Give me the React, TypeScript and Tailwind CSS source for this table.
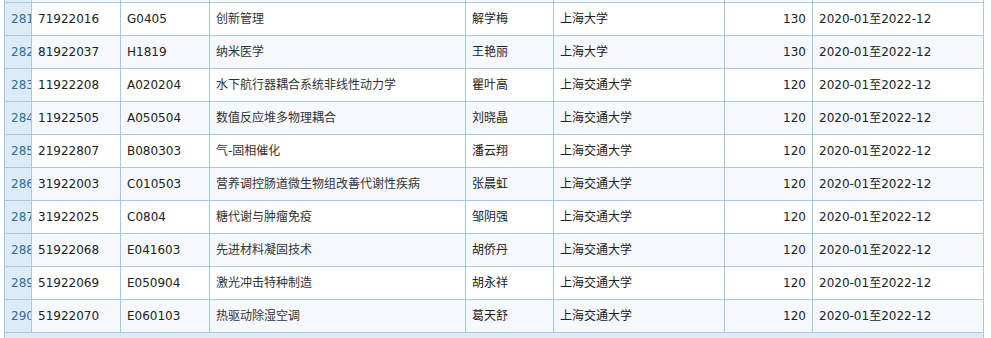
const rows = [
  ["281", "71922016", "G0405", "创新管理", "解学梅", "上海大学", "130"],
  ["282", "81922037", "H1819", "纳米医学", "王艳丽", "上海大学", "130"],
  ["283", "11922208", "A020204", "水下航行器耦合系统非线性动力学", "瞿叶高", "上海交通大学", "120"],
  ["284", "11922505", "A050504", "数值反应堆多物理耦合", "刘晓晶", "上海交通大学", "120"],
  ["285", "21922807", "B080303", "气-固相催化", "潘云翔", "上海交通大学", "120"],
  ["286", "31922003", "C010503", "营养调控肠道微生物组改善代谢性疾病", "张晨虹", "上海交通大学", "120"],
  ["287", "31922025", "C0804", "糖代谢与肿瘤免疫", "邹阴强", "上海交通大学", "120"],
  ["288", "51922068", "E041603", "先进材料凝固技术", "胡侨丹", "上海交通大学", "120"],
  ["289", "51922069", "E050904", "激光冲击特种制造", "胡永祥", "上海交通大学", "120"],
  ["290", "51922070", "E060103", "热驱动除湿空调", "葛天舒", "上海交通大学", "120"],
];

const widths = [27, 89, 89, 256, 88, 171, 88, 171];

export default function App() {
  return (
    <div
      className="w-[991px] h-[338px] overflow-hidden bg-white pl-[4px] text-[12px] text-[#222]"
      style={{ fontFamily: '"DejaVu Sans", "Noto Sans CJK SC", sans-serif' }}
    >
      <table className="table-fixed w-[980px] border-separate border-spacing-0 border-l border-[#a6c9e2]">
        <colgroup>
          {widths.map((w, i) => (
            <col key={i} style={{ width: w }} />
          ))}
        </colgroup>
        <tbody>
          <tr>
            <td className="h-[3px] p-0 bg-[#dcebf6] border-r border-b border-[#a6c9e2]"></td>
            {widths.slice(1).map((_, i) => (
              <td key={i} className="h-[3px] p-0 bg-[#f5f9fe] border-r border-b border-[#a6c9e2]"></td>
            ))}
          </tr>
          {rows.map((r, i) => {
            const bg = i % 2 === 0 ? "bg-white" : "bg-[#f5f9fe]";
            const cell = `h-[33px] p-0 px-[6px] border-r border-b border-[#a6c9e2] whitespace-nowrap overflow-hidden align-middle ${bg}`;
            return (
              <tr key={r[0]}>
                <td className="h-[33px] p-0 pl-[6px] border-r border-b border-[#a6c9e2] whitespace-nowrap overflow-hidden bg-[#dcebf6] text-[#2e6ea0]">
                  {r[0]}
                </td>
                <td className={cell}>{r[1]}</td>
                <td className={cell}>{r[2]}</td>
                <td className={`${cell} text-[#333]`}>{r[3]}</td>
                <td className={cell}>{r[4]}</td>
                <td className={cell}>{r[5]}</td>
                <td className={`${cell} text-right`}>{r[6]}</td>
                <td className={cell}>2020-01至2022-12</td>
              </tr>
            );
          })}
          <tr>
            <td colSpan={8} className="h-[20px] p-0 bg-[#dcebf6] border-r border-[#a6c9e2]"></td>
          </tr>
        </tbody>
      </table>
    </div>
  );
}
